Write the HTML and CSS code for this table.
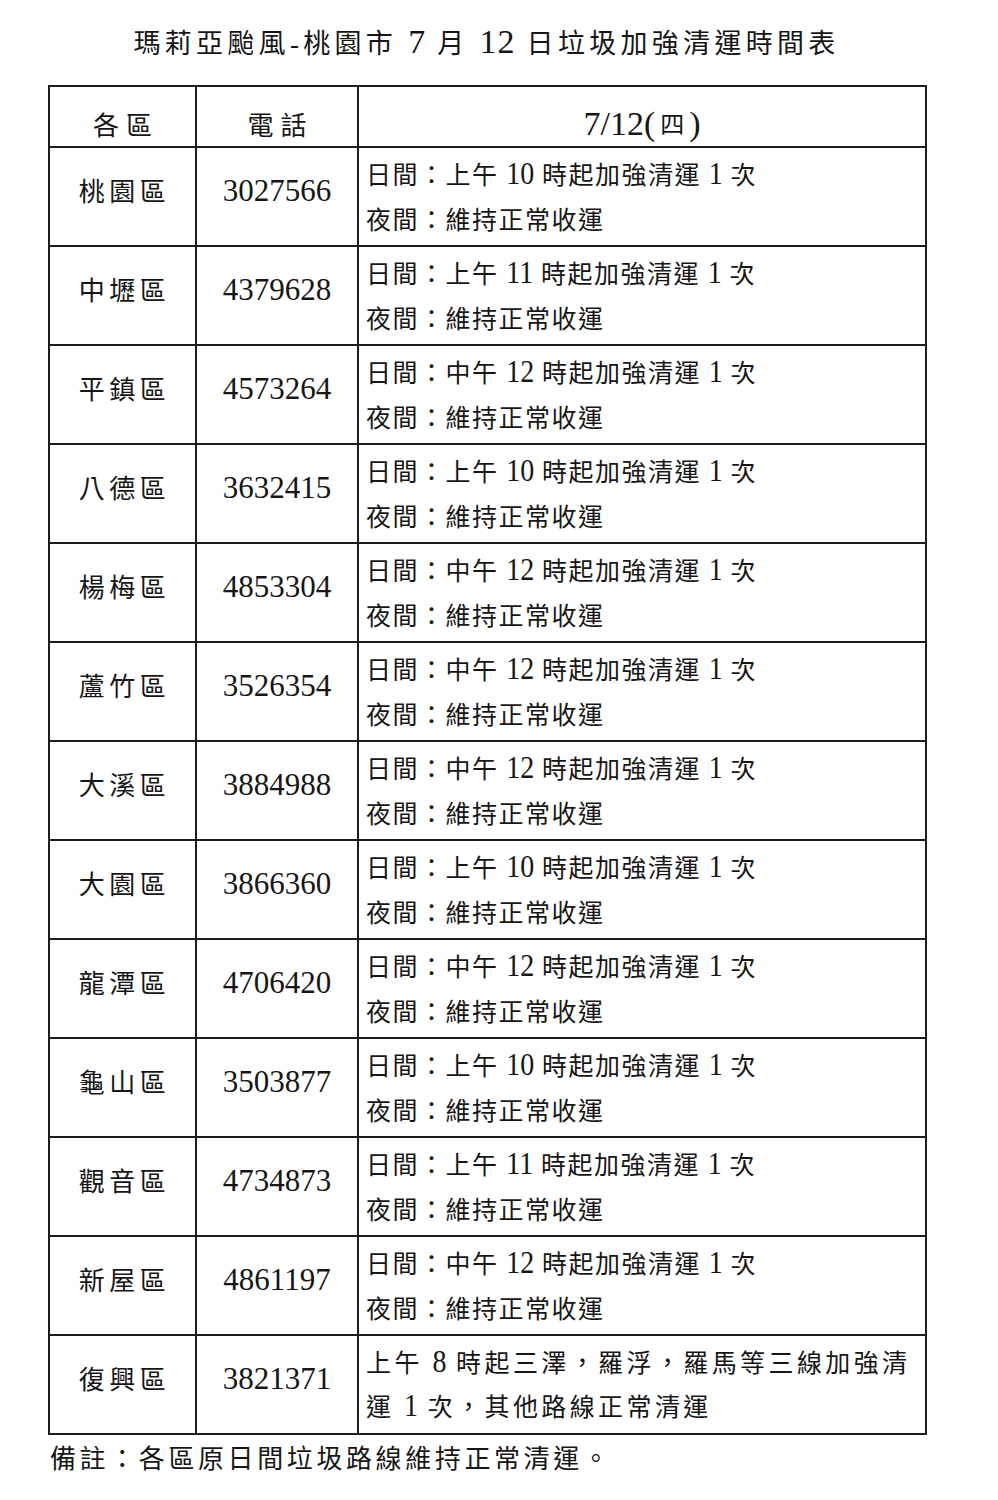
FILE: index.html
```html
<!DOCTYPE html>
<html lang="zh-Hant">
<head>
<meta charset="utf-8">
<title>瑪莉亞颱風-桃園市 7 月 12 日垃圾加強清運時間表</title>
<link rel="stylesheet" href="styles.css">
</head>
<body>
<div class="page">
  <h1 class="title">瑪莉亞颱風-桃園市 <span class="t-num">7</span> 月 <span class="t-num">12</span> 日垃圾加強清運時間表</h1>
  <table class="schedule">
    <colgroup><col class="c-dist"><col class="c-tel"><col class="c-sched"></colgroup>
    <thead>
      <tr><th class="h-cjk">各區</th><th class="h-cjk">電話</th><th class="h-date">7/12(<span class="h-day">四</span>)</th></tr>
    </thead>
    <tbody>
      <tr><td class="dist">桃園區</td><td class="tel">3027566</td><td class="sched"><div>日間：上午 <span class="num">10</span> 時起加強清運 <span class="num">1</span> 次</div><div>夜間：維持正常收運</div></td></tr>
      <tr><td class="dist">中壢區</td><td class="tel">4379628</td><td class="sched"><div>日間：上午 <span class="num">11</span> 時起加強清運 <span class="num">1</span> 次</div><div>夜間：維持正常收運</div></td></tr>
      <tr><td class="dist">平鎮區</td><td class="tel">4573264</td><td class="sched"><div>日間：中午 <span class="num">12</span> 時起加強清運 <span class="num">1</span> 次</div><div>夜間：維持正常收運</div></td></tr>
      <tr><td class="dist">八德區</td><td class="tel">3632415</td><td class="sched"><div>日間：上午 <span class="num">10</span> 時起加強清運 <span class="num">1</span> 次</div><div>夜間：維持正常收運</div></td></tr>
      <tr><td class="dist">楊梅區</td><td class="tel">4853304</td><td class="sched"><div>日間：中午 <span class="num">12</span> 時起加強清運 <span class="num">1</span> 次</div><div>夜間：維持正常收運</div></td></tr>
      <tr><td class="dist">蘆竹區</td><td class="tel">3526354</td><td class="sched"><div>日間：中午 <span class="num">12</span> 時起加強清運 <span class="num">1</span> 次</div><div>夜間：維持正常收運</div></td></tr>
      <tr><td class="dist">大溪區</td><td class="tel">3884988</td><td class="sched"><div>日間：中午 <span class="num">12</span> 時起加強清運 <span class="num">1</span> 次</div><div>夜間：維持正常收運</div></td></tr>
      <tr><td class="dist">大園區</td><td class="tel">3866360</td><td class="sched"><div>日間：上午 <span class="num">10</span> 時起加強清運 <span class="num">1</span> 次</div><div>夜間：維持正常收運</div></td></tr>
      <tr><td class="dist">龍潭區</td><td class="tel">4706420</td><td class="sched"><div>日間：中午 <span class="num">12</span> 時起加強清運 <span class="num">1</span> 次</div><div>夜間：維持正常收運</div></td></tr>
      <tr><td class="dist">龜山區</td><td class="tel">3503877</td><td class="sched"><div>日間：上午 <span class="num">10</span> 時起加強清運 <span class="num">1</span> 次</div><div>夜間：維持正常收運</div></td></tr>
      <tr><td class="dist">觀音區</td><td class="tel">4734873</td><td class="sched"><div>日間：上午 <span class="num">11</span> 時起加強清運 <span class="num">1</span> 次</div><div>夜間：維持正常收運</div></td></tr>
      <tr><td class="dist">新屋區</td><td class="tel">4861197</td><td class="sched"><div>日間：中午 <span class="num">12</span> 時起加強清運 <span class="num">1</span> 次</div><div>夜間：維持正常收運</div></td></tr>
      <tr><td class="dist">復興區</td><td class="tel">3821371</td><td class="sched sched-long"><div>上午 <span class="num">8</span> 時起三澤，羅浮，羅馬等三線加強清</div><div>運 <span class="num">1</span> 次，其他路線正常清運</div></td></tr>
    </tbody>
  </table>
  <p class="remark">備註：各區原日間垃圾路線維持正常清運。</p>
</div>
</body>
</html>
```

FILE: styles.css
```css
html, body {
  margin: 0;
  padding: 0;
  background: #ffffff;
}

body {
  font-family: "Liberation Serif", "Noto Sans CJK TC", serif;
  color: #161616;
}

.page {
  width: 877px;
  padding-left: 48px;
}

.title {
  margin: 0 0 26px 0;
  padding-top: 29px;
  height: 30px;
  font-size: 27px;
  line-height: 30px;
  font-weight: 400;
  letter-spacing: 4.3px;
  text-align: center;
  white-space: nowrap;
}

.t-num {
  font-size: 34px;
  line-height: 0;
  letter-spacing: 1px;
}

.schedule {
  border-collapse: collapse;
  table-layout: fixed;
  width: 877px;
}

.c-dist { width: 147px; }
.c-tel { width: 162px; }
.c-sched { width: 568px; }

.schedule th,
.schedule td {
  border: 2px solid #1c1c1c;
  padding: 0;
  vertical-align: middle;
  font-weight: 400;
}

.schedule thead tr { height: 61px; }
.schedule tbody tr { height: 99px; }

.schedule .h-cjk {
  font-size: 26px;
  letter-spacing: 7px;
  padding: 14px 0 0 7px;
  text-align: center;
}

.schedule .h-date {
  font-size: 34px;
  padding-top: 14px;
  text-align: center;
}

.h-day {
  font-size: 24px;
  margin: 0 5px;
  vertical-align: 2px;
}

.schedule .dist {
  font-size: 26px;
  letter-spacing: 4.5px;
  padding: 0 0 14px 4px;
  text-align: center;
}

.schedule .tel {
  font-size: 31px;
  padding-bottom: 12px;
  text-align: center;
}

.schedule .sched {
  font-size: 25px;
  letter-spacing: 1.5px;
  line-height: 45px;
  padding: 2px 0 0 7px;
  text-align: left;
  white-space: nowrap;
}

.num {
  display: inline-block;
  font-size: 28px;
  line-height: 28px;
  letter-spacing: 0;
  transform: scaleY(1.15);
  transform-origin: 50% 84%;
}

.schedule .sched-long {
  letter-spacing: 3.4px;
  line-height: 44px;
}

.remark {
  margin: 10px 0 0 0;
  padding-left: 2px;
  font-size: 26px;
  line-height: 30px;
  letter-spacing: 3.6px;
  white-space: nowrap;
}
```
